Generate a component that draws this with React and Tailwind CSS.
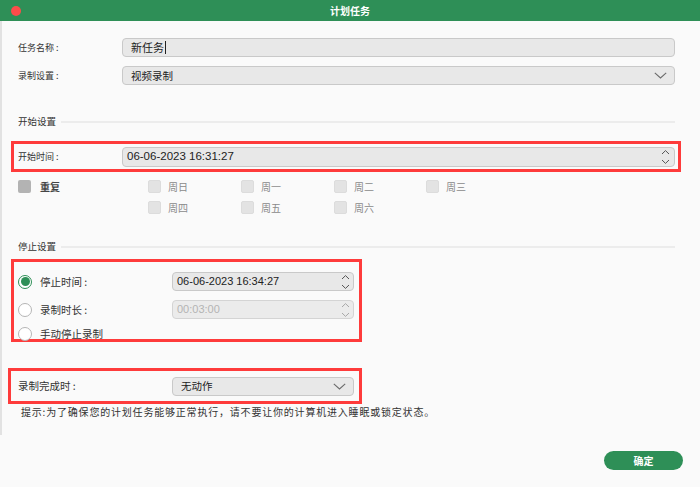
import React from 'react';

const CJK = { fontFamily: '"Noto Sans CJK SC", "Liberation Sans", sans-serif' };
const NUM = { fontFamily: '"Liberation Sans", "Noto Sans CJK SC", sans-serif' };

function Chevron() {
    return (
        <svg width="13" height="7" viewBox="0 0 13 7" className="shrink-0">
            <path d="M0.8 0.8 L6.5 6 L12.2 0.8" fill="none" stroke="#6b6b6b" strokeWidth="1.1" />
        </svg>
    );
}

function Stepper({ muted }) {
    const c = muted ? '#a8a8a8' : '#555';
    return (
        <svg width="9" height="16" viewBox="0 0 9 16" className="shrink-0">
            <path d="M1 5 L4.5 1.6 L8 5" fill="none" stroke={c} strokeWidth="1" />
            <path d="M1 11 L4.5 14.4 L8 11" fill="none" stroke={c} strokeWidth="1" />
        </svg>
    );
}

function Box({ children, className = '' }) {
    return (
        <div className={`flex items-center bg-[#e8e8e8] border border-[#c9c9c9] rounded-[4px] ${className}`}>
            {children}
        </div>
    );
}

function Radio({ checked }) {
    if (checked) {
        return (
            <div className="w-[14px] h-[14px] rounded-full border border-[#2e8f57] bg-white flex items-center justify-center shrink-0">
                <div className="w-[9px] h-[9px] rounded-full bg-[#2e8f57]" />
            </div>
        );
    }
    return <div className="w-[14px] h-[14px] rounded-full border border-[#b5b5b5] bg-white shrink-0" />;
}

function Day({ label }) {
    return (
        <div className="flex items-center h-[13px]">
            <div className="w-[13px] h-[13px] rounded-[2px] bg-[#e3e3e3] border border-[#dcdcdc]" />
            <span className="ml-[7px] text-[10px] text-[#8a8a8a]">{label}</span>
        </div>
    );
}

function Section({ title, className = '' }) {
    return (
        <div className={`flex items-center h-[14px] pl-[7px] pr-[6px] ${className}`}>
            <span className="text-[9.5px] text-[#333]">{title}</span>
            <div className="flex-1 h-[2px] bg-[#ececec] ml-[5px] mt-[2px]" />
        </div>
    );
}

export default function App() {
    return (
        <div className="w-[700px] h-[487px] bg-[#fafafa] flex flex-col overflow-hidden" style={CJK}>
            <header className="h-[21px] bg-[#2e8f57] relative flex items-center justify-center shrink-0">
                <div className="absolute left-[11px] top-[6px] w-[10px] h-[10px] rounded-full bg-[#fd4c4a]" />
                <span className="text-white text-[10px] font-bold">计划任务</span>
            </header>

            <div className="h-[414px] border-l-2 border-[#e2e2e2] pl-[9px] pr-[19px] flex flex-col shrink-0">
                <div className="mt-[17px] h-[19px] flex items-center pl-[7px] pr-[6px]">
                    <span className="w-[104px] text-[9px] text-[#333] whitespace-pre">任务名称 :</span>
                    <Box className="flex-1 h-[19px] px-[8px]">
                        <span className="text-[11px] text-[#222]">新任务</span>
                        <span className="w-px h-[13px] bg-[#222] ml-[1px]" />
                    </Box>
                </div>
                <div className="mt-[9px] h-[19px] flex items-center pl-[7px] pr-[6px]">
                    <span className="w-[104px] text-[9px] text-[#333] whitespace-pre">录制设置 :</span>
                    <Box className="flex-1 h-[19px] pl-[8px] pr-[7px] justify-between">
                        <span className="text-[10.5px] text-[#222]">视频录制</span>
                        <Chevron />
                    </Box>
                </div>

                <Section title="开始设置" className="mt-[29px]" />

                <div className="mt-[13px] h-[31px] border-[3px] border-[#fe3b3b] flex items-center pl-[4px] pr-[3px]">
                    <span className="w-[104px] text-[9px] text-[#333] whitespace-pre">开始时间 :</span>
                    <Box className="flex-1 h-[20px] pl-[4px] pr-[4px] justify-between">
                        <span className="text-[11.5px] text-[#222]" style={NUM}>06-06-2023 16:31:27</span>
                        <Stepper />
                    </Box>
                </div>

                <div className="mt-[8px] flex pl-[7px]">
                    <div className="w-[130px] flex items-start">
                        <div className="flex items-center h-[13px]">
                            <div className="w-[13px] h-[13px] rounded-[2px] bg-[#b3b3b3]" />
                            <span className="ml-[9px] text-[10px] font-bold text-[#444]">重复</span>
                        </div>
                    </div>
                    <div className="grid grid-cols-[93px_93px_92px_93px] gap-y-[8px]">
                        <Day label="周日" />
                        <Day label="周一" />
                        <Day label="周二" />
                        <Day label="周三" />
                        <Day label="周四" />
                        <Day label="周五" />
                        <Day label="周六" />
                    </div>
                </div>

                <Section title="停止设置" className="mt-[25px]" />

                <div className="mt-[6px] w-[351px] h-[83px] border-[3px] border-[#fe3b3b] flex flex-col pl-[4px] pr-[5px]">
                    <div className="mt-[10px] h-[19px] flex items-center shrink-0">
                        <Radio checked />
                        <span className="ml-[8px] w-[132px] text-[10.5px] text-[#333] whitespace-pre">停止时间 :</span>
                        <Box className="flex-1 h-[19px] pl-[4px] pr-[3px] justify-between">
                            <span className="text-[11px] text-[#222]" style={NUM}>06-06-2023 16:34:27</span>
                            <Stepper />
                        </Box>
                    </div>
                    <div className="mt-[9px] h-[19px] flex items-center shrink-0">
                        <Radio />
                        <span className="ml-[8px] w-[132px] text-[10.5px] text-[#333] whitespace-pre">录制时长 :</span>
                        <Box className="flex-1 h-[19px] pl-[4px] pr-[3px] justify-between bg-[#ebebeb] border-[#d4d4d4]">
                            <span className="text-[11px] text-[#b4b4b4]" style={NUM}>00:03:00</span>
                            <Stepper muted />
                        </Box>
                    </div>
                    <div className="mt-[8px] h-[14px] flex items-center shrink-0">
                        <Radio />
                        <span className="ml-[8px] text-[10.5px] text-[#333]">手动停止录制</span>
                    </div>
                </div>

                <div className="mt-[26px] -ml-[3px] w-[354px] h-[36px] border-[3px] border-[#fe3b3b] flex items-center pl-[7px] pr-[5px]">
                    <span className="w-[154px] text-[10.5px] text-[#333] whitespace-pre">录制完成时 :</span>
                    <Box className="flex-1 h-[19px] pl-[8px] pr-[7px] justify-between">
                        <span className="text-[10.5px] text-[#222]">无动作</span>
                        <Chevron />
                    </Box>
                </div>

                <p className="mt-[1px] pl-[10px] text-[10px] tracking-[0.8px] text-[#333] leading-[14px]">
                    提示:为了确保您的计划任务能够正常执行，请不要让你的计算机进入睡眠或锁定状态。
                </p>
            </div>

            <div className="flex justify-end pt-[16px] pr-[17px]">
                <button className="w-[79px] h-[19px] rounded-full bg-[#2e8f57] text-white text-[10px] font-bold flex items-center justify-center">
                    确定
                </button>
            </div>
        </div>
    );
}
